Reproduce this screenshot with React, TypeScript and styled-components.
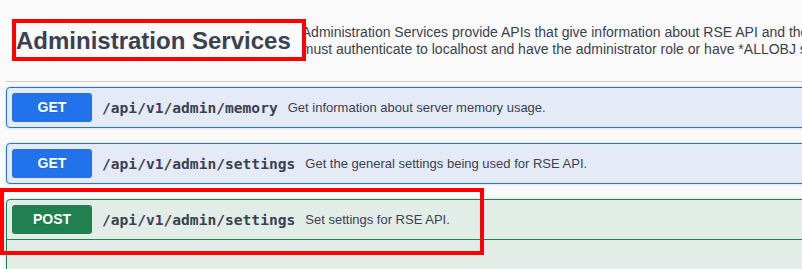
import React from "react";
import styled, { createGlobalStyle } from "styled-components";

const GlobalStyle = createGlobalStyle`
    html, body {
        margin: 0;
        padding: 0;
        background: #fafafa;
        overflow: hidden;
    }
    body {
        width: 802px;
        height: 269px;
        font-family: "Liberation Sans", Arial, sans-serif;
        color: #3b4151;
    }
`;

const METHOD_COLORS: Record<string, { main: string; bg: string }> = {
    GET: { main: "#2272ec", bg: "#e4ebf7" },
    POST: { main: "#21804f", bg: "#e3ede8" },
};

const operations = [
    { method: "GET", path: "/api/v1/admin/memory", summary: "Get information about server memory usage." },
    { method: "GET", path: "/api/v1/admin/settings", summary: "Get the general settings being used for RSE API." },
    { method: "POST", path: "/api/v1/admin/settings", summary: "Set settings for RSE API.", open: true },
];

function App() {
    return (
        <Page>
            <GlobalStyle />
            <Section>
                <TagHeader>
                    <TagTitle>Administration Services</TagTitle>
                    <TagDescription>
                        Administration Services provide APIs that give information about RSE API and the server. To use these APIs, you
                        <br />
                        must authenticate to localhost and have the administrator role or have *ALLOBJ special authority.
                    </TagDescription>
                </TagHeader>
                {operations.map((op, idx) => (
                    <OpBlock key={idx} $method={op.method}>
                        <Summary $method={op.method} $open={!!op.open}>
                            <Method $method={op.method}>{op.method}</Method>
                            <Path>{op.path}</Path>
                            <Description>{op.summary}</Description>
                        </Summary>
                        {op.open && <Body />}
                    </OpBlock>
                ))}
            </Section>
            <Highlight $left={12} $top={19} $width={294} $height={42} />
            <Highlight $left={0} $top={188} $width={484} $height={67} />
        </Page>
    );
}

export default App;

const Page = styled.div`
    position: relative;
    width: 802px;
    height: 269px;
    overflow: hidden;
`;

const Section = styled.div`
    width: 1100px;
    padding-left: 6px;
`;

const TagHeader = styled.div`
    display: flex;
    align-items: center;
    height: 82px;
    padding-left: 10px;
    margin-bottom: 5px;
    border-bottom: 1px solid rgba(59, 65, 81, 0.25);
    box-sizing: border-box;
`;

const TagTitle = styled.h3`
    margin: 0;
    padding-right: 11px;
    font-size: 24px;
    font-weight: 700;
    line-height: 1;
    white-space: nowrap;
`;

const TagDescription = styled.div`
    margin-top: 1px;
    font-size: 14px;
    line-height: 16.6px;
    white-space: nowrap;
`;

const OpBlock = styled.div<{ $method: string }>`
    margin-bottom: 15px;
    border: 1px solid ${(p) => METHOD_COLORS[p.$method].main};
    border-radius: 4px;
    background: ${(p) => METHOD_COLORS[p.$method].bg};
    box-shadow: 0 0 3px rgba(0, 0, 0, 0.19);
`;

const Summary = styled.div<{ $method: string; $open: boolean }>`
    display: flex;
    align-items: center;
    padding: 5px;
    border-bottom: ${(p) => (p.$open ? `1px solid ${METHOD_COLORS[p.$method].main}` : "none")};
`;

const Method = styled.span<{ $method: string }>`
    min-width: 80px;
    padding: 6px 0;
    border-radius: 3px;
    background: ${(p) => METHOD_COLORS[p.$method].main};
    color: #fff;
    font-size: 14px;
    font-weight: 700;
    line-height: 17px;
    text-align: center;
    text-shadow: 0 1px 0 rgba(0, 0, 0, 0.1);
`;

const Path = styled.span`
    padding: 0 10px;
    font-family: "DejaVu Sans Mono", "Liberation Mono", monospace;
    font-size: 14.6px;
    font-weight: 700;
    white-space: nowrap;
`;

const Description = styled.span`
    font-size: 13px;
    white-space: nowrap;
`;

const Body = styled.div`
    height: 60px;
`;

const Highlight = styled.div<{ $left: number; $top: number; $width: number; $height: number }>`
    position: absolute;
    left: ${(p) => p.$left}px;
    top: ${(p) => p.$top}px;
    width: ${(p) => p.$width}px;
    height: ${(p) => p.$height}px;
    border: 4px solid #ff0000;
    box-sizing: border-box;
    pointer-events: none;
`;
